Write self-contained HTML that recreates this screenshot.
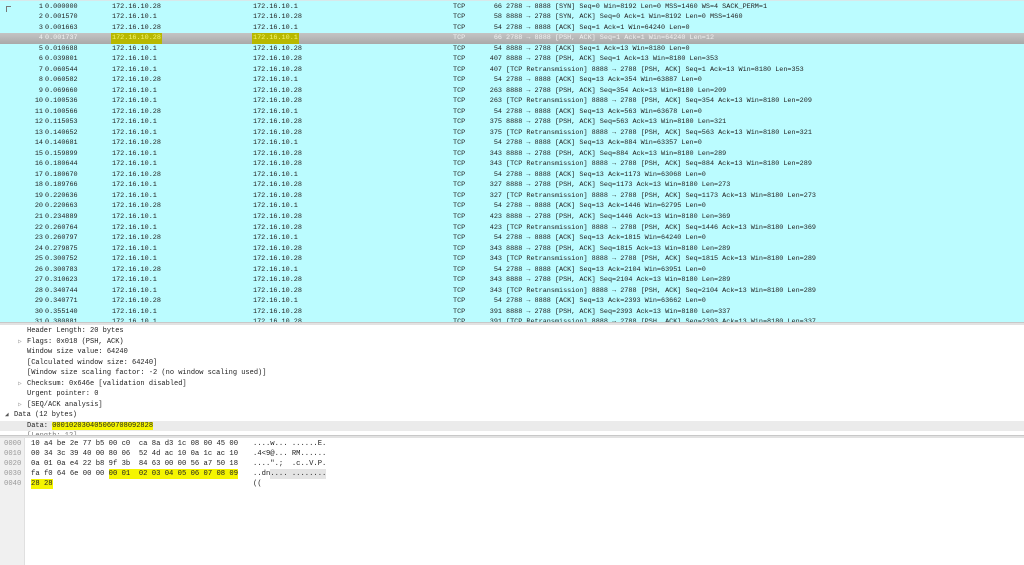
<!DOCTYPE html>
<html><head><meta charset="utf-8"><style>
*{margin:0;padding:0;box-sizing:border-box}
body{width:1024px;height:565px;overflow:hidden;background:#fff;font-family:"Liberation Mono","DejaVu Sans Mono",monospace;color:#222;position:relative}
#top{position:absolute;left:0;top:0;width:1024px;height:322px;background:#bbfcff;overflow:hidden;border-top:1px solid #d8e8ea}
.r{position:absolute;left:0;width:1024px;height:10.5px;font-size:6.8px;line-height:10.5px;white-space:pre}
.r span{position:absolute;top:0}
.n{right:981px;text-align:right}
.t{left:45px}.s{left:112px}.d{left:253px}.p{left:453px}
.l{right:522px;text-align:right}.i{left:506px}
.sel{background:linear-gradient(#c4c4c4,#a9a9a9);color:#f0f0f0}
.sel .hl{background:#e8e800;color:#dada40;padding:0 1px;margin-left:-1px}
.sel .hl{color:#f4f470;background:#b8b800}
#sep1{position:absolute;left:0;top:322px;width:1024px;height:3px;background:#e2e2e2;border-top:1px solid #c8c8c8}
#det{position:absolute;left:0;top:325px;width:1024px;height:110px;background:#fff;overflow:hidden}
.dr{position:absolute;left:0;width:1024px;height:10.5px;font-size:7px;line-height:10.5px;white-space:pre}
.dr span{position:absolute;top:0}
.ar{color:#888;font-size:6px}
#sep2{position:absolute;left:0;top:435px;width:1024px;height:3px;background:#e2e2e2;border-top:1px solid #c8c8c8}
#gut{position:absolute;left:0;top:438px;width:25px;height:127px;background:#f0f0f0;border-right:1px solid #e0e0e0}
.br{position:absolute;left:0;height:10px;font-size:7.2px;line-height:10px;white-space:pre}
.br span{position:absolute;top:0}
.o{left:4px;color:#999}.h{left:31px}.a{left:253px}
.y{background:#f5f500}
</style></head><body>
<div id="top">
<div style="position:absolute;left:6px;top:5px;width:5px;height:6px;border-left:1px solid #777;border-top:1px solid #777"></div>
<div class="r" style="top:0.5px"><span class="n">1</span><span class="t">0.000000</span><span class="s">172.16.10.28</span><span class="d">172.16.10.1</span><span class="p">TCP</span><span class="l">66</span><span class="i">2788 → 8888 [SYN] Seq=0 Win=8192 Len=0 MSS=1460 WS=4 SACK_PERM=1</span></div>
<div class="r" style="top:11px"><span class="n">2</span><span class="t">0.001570</span><span class="s">172.16.10.1</span><span class="d">172.16.10.28</span><span class="p">TCP</span><span class="l">58</span><span class="i">8888 → 2788 [SYN, ACK] Seq=0 Ack=1 Win=8192 Len=0 MSS=1460</span></div>
<div class="r" style="top:21.5px"><span class="n">3</span><span class="t">0.001663</span><span class="s">172.16.10.28</span><span class="d">172.16.10.1</span><span class="p">TCP</span><span class="l">54</span><span class="i">2788 → 8888 [ACK] Seq=1 Ack=1 Win=64240 Len=0</span></div>
<div class="r sel" style="top:32px"><span class="n">4</span><span class="t">0.001737</span><span class="s hl">172.16.10.28</span><span class="d hl">172.16.10.1</span><span class="p">TCP</span><span class="l">66</span><span class="i">2788 → 8888 [PSH, ACK] Seq=1 Ack=1 Win=64240 Len=12</span></div>
<div class="r" style="top:42.6px"><span class="n">5</span><span class="t">0.010688</span><span class="s">172.16.10.1</span><span class="d">172.16.10.28</span><span class="p">TCP</span><span class="l">54</span><span class="i">8888 → 2788 [ACK] Seq=1 Ack=13 Win=8180 Len=0</span></div>
<div class="r" style="top:53.1px"><span class="n">6</span><span class="t">0.039801</span><span class="s">172.16.10.1</span><span class="d">172.16.10.28</span><span class="p">TCP</span><span class="l">407</span><span class="i">8888 → 2788 [PSH, ACK] Seq=1 Ack=13 Win=8180 Len=353</span></div>
<div class="r" style="top:63.6px"><span class="n">7</span><span class="t">0.060544</span><span class="s">172.16.10.1</span><span class="d">172.16.10.28</span><span class="p">TCP</span><span class="l">407</span><span class="i">[TCP Retransmission] 8888 → 2788 [PSH, ACK] Seq=1 Ack=13 Win=8180 Len=353</span></div>
<div class="r" style="top:74.1px"><span class="n">8</span><span class="t">0.060582</span><span class="s">172.16.10.28</span><span class="d">172.16.10.1</span><span class="p">TCP</span><span class="l">54</span><span class="i">2788 → 8888 [ACK] Seq=13 Ack=354 Win=63887 Len=0</span></div>
<div class="r" style="top:84.7px"><span class="n">9</span><span class="t">0.069660</span><span class="s">172.16.10.1</span><span class="d">172.16.10.28</span><span class="p">TCP</span><span class="l">263</span><span class="i">8888 → 2788 [PSH, ACK] Seq=354 Ack=13 Win=8180 Len=209</span></div>
<div class="r" style="top:95.2px"><span class="n">10</span><span class="t">0.100536</span><span class="s">172.16.10.1</span><span class="d">172.16.10.28</span><span class="p">TCP</span><span class="l">263</span><span class="i">[TCP Retransmission] 8888 → 2788 [PSH, ACK] Seq=354 Ack=13 Win=8180 Len=209</span></div>
<div class="r" style="top:105.7px"><span class="n">11</span><span class="t">0.100566</span><span class="s">172.16.10.28</span><span class="d">172.16.10.1</span><span class="p">TCP</span><span class="l">54</span><span class="i">2788 → 8888 [ACK] Seq=13 Ack=563 Win=63678 Len=0</span></div>
<div class="r" style="top:116.2px"><span class="n">12</span><span class="t">0.115053</span><span class="s">172.16.10.1</span><span class="d">172.16.10.28</span><span class="p">TCP</span><span class="l">375</span><span class="i">8888 → 2788 [PSH, ACK] Seq=563 Ack=13 Win=8180 Len=321</span></div>
<div class="r" style="top:126.8px"><span class="n">13</span><span class="t">0.140652</span><span class="s">172.16.10.1</span><span class="d">172.16.10.28</span><span class="p">TCP</span><span class="l">375</span><span class="i">[TCP Retransmission] 8888 → 2788 [PSH, ACK] Seq=563 Ack=13 Win=8180 Len=321</span></div>
<div class="r" style="top:137.3px"><span class="n">14</span><span class="t">0.140681</span><span class="s">172.16.10.28</span><span class="d">172.16.10.1</span><span class="p">TCP</span><span class="l">54</span><span class="i">2788 → 8888 [ACK] Seq=13 Ack=884 Win=63357 Len=0</span></div>
<div class="r" style="top:147.8px"><span class="n">15</span><span class="t">0.159899</span><span class="s">172.16.10.1</span><span class="d">172.16.10.28</span><span class="p">TCP</span><span class="l">343</span><span class="i">8888 → 2788 [PSH, ACK] Seq=884 Ack=13 Win=8180 Len=289</span></div>
<div class="r" style="top:158.3px"><span class="n">16</span><span class="t">0.180644</span><span class="s">172.16.10.1</span><span class="d">172.16.10.28</span><span class="p">TCP</span><span class="l">343</span><span class="i">[TCP Retransmission] 8888 → 2788 [PSH, ACK] Seq=884 Ack=13 Win=8180 Len=289</span></div>
<div class="r" style="top:168.9px"><span class="n">17</span><span class="t">0.180670</span><span class="s">172.16.10.28</span><span class="d">172.16.10.1</span><span class="p">TCP</span><span class="l">54</span><span class="i">2788 → 8888 [ACK] Seq=13 Ack=1173 Win=63068 Len=0</span></div>
<div class="r" style="top:179.4px"><span class="n">18</span><span class="t">0.189766</span><span class="s">172.16.10.1</span><span class="d">172.16.10.28</span><span class="p">TCP</span><span class="l">327</span><span class="i">8888 → 2788 [PSH, ACK] Seq=1173 Ack=13 Win=8180 Len=273</span></div>
<div class="r" style="top:189.9px"><span class="n">19</span><span class="t">0.220636</span><span class="s">172.16.10.1</span><span class="d">172.16.10.28</span><span class="p">TCP</span><span class="l">327</span><span class="i">[TCP Retransmission] 8888 → 2788 [PSH, ACK] Seq=1173 Ack=13 Win=8180 Len=273</span></div>
<div class="r" style="top:200.4px"><span class="n">20</span><span class="t">0.220663</span><span class="s">172.16.10.28</span><span class="d">172.16.10.1</span><span class="p">TCP</span><span class="l">54</span><span class="i">2788 → 8888 [ACK] Seq=13 Ack=1446 Win=62795 Len=0</span></div>
<div class="r" style="top:211px"><span class="n">21</span><span class="t">0.234889</span><span class="s">172.16.10.1</span><span class="d">172.16.10.28</span><span class="p">TCP</span><span class="l">423</span><span class="i">8888 → 2788 [PSH, ACK] Seq=1446 Ack=13 Win=8180 Len=369</span></div>
<div class="r" style="top:221.5px"><span class="n">22</span><span class="t">0.260764</span><span class="s">172.16.10.1</span><span class="d">172.16.10.28</span><span class="p">TCP</span><span class="l">423</span><span class="i">[TCP Retransmission] 8888 → 2788 [PSH, ACK] Seq=1446 Ack=13 Win=8180 Len=369</span></div>
<div class="r" style="top:232px"><span class="n">23</span><span class="t">0.260797</span><span class="s">172.16.10.28</span><span class="d">172.16.10.1</span><span class="p">TCP</span><span class="l">54</span><span class="i">2788 → 8888 [ACK] Seq=13 Ack=1815 Win=64240 Len=0</span></div>
<div class="r" style="top:242.5px"><span class="n">24</span><span class="t">0.279875</span><span class="s">172.16.10.1</span><span class="d">172.16.10.28</span><span class="p">TCP</span><span class="l">343</span><span class="i">8888 → 2788 [PSH, ACK] Seq=1815 Ack=13 Win=8180 Len=289</span></div>
<div class="r" style="top:253.1px"><span class="n">25</span><span class="t">0.300752</span><span class="s">172.16.10.1</span><span class="d">172.16.10.28</span><span class="p">TCP</span><span class="l">343</span><span class="i">[TCP Retransmission] 8888 → 2788 [PSH, ACK] Seq=1815 Ack=13 Win=8180 Len=289</span></div>
<div class="r" style="top:263.6px"><span class="n">26</span><span class="t">0.300783</span><span class="s">172.16.10.28</span><span class="d">172.16.10.1</span><span class="p">TCP</span><span class="l">54</span><span class="i">2788 → 8888 [ACK] Seq=13 Ack=2104 Win=63951 Len=0</span></div>
<div class="r" style="top:274.1px"><span class="n">27</span><span class="t">0.310623</span><span class="s">172.16.10.1</span><span class="d">172.16.10.28</span><span class="p">TCP</span><span class="l">343</span><span class="i">8888 → 2788 [PSH, ACK] Seq=2104 Ack=13 Win=8180 Len=289</span></div>
<div class="r" style="top:284.6px"><span class="n">28</span><span class="t">0.340744</span><span class="s">172.16.10.1</span><span class="d">172.16.10.28</span><span class="p">TCP</span><span class="l">343</span><span class="i">[TCP Retransmission] 8888 → 2788 [PSH, ACK] Seq=2104 Ack=13 Win=8180 Len=289</span></div>
<div class="r" style="top:295.2px"><span class="n">29</span><span class="t">0.340771</span><span class="s">172.16.10.28</span><span class="d">172.16.10.1</span><span class="p">TCP</span><span class="l">54</span><span class="i">2788 → 8888 [ACK] Seq=13 Ack=2393 Win=63662 Len=0</span></div>
<div class="r" style="top:305.7px"><span class="n">30</span><span class="t">0.355140</span><span class="s">172.16.10.1</span><span class="d">172.16.10.28</span><span class="p">TCP</span><span class="l">391</span><span class="i">8888 → 2788 [PSH, ACK] Seq=2393 Ack=13 Win=8180 Len=337</span></div>
<div class="r" style="top:316.2px"><span class="n">31</span><span class="t">0.380881</span><span class="s">172.16.10.1</span><span class="d">172.16.10.28</span><span class="p">TCP</span><span class="l">391</span><span class="i">[TCP Retransmission] 8888 → 2788 [PSH, ACK] Seq=2393 Ack=13 Win=8180 Len=337</span></div>
</div>
<div id="sep1"></div>
<div id="det">
<div class="dr" style="top:1px"><span style="left:27px">Header Length: 20 bytes</span></div>
<div class="dr" style="top:11.5px"><span class="ar" style="left:18px">▷</span><span style="left:27px">Flags: 0x018 (PSH, ACK)</span></div>
<div class="dr" style="top:22px"><span style="left:27px">Window size value: 64240</span></div>
<div class="dr" style="top:32.5px"><span style="left:27px">[Calculated window size: 64240]</span></div>
<div class="dr" style="top:43px"><span style="left:27px">[Window size scaling factor: -2 (no window scaling used)]</span></div>
<div class="dr" style="top:53.5px"><span class="ar" style="left:18px">▷</span><span style="left:27px">Checksum: 0x646e [validation disabled]</span></div>
<div class="dr" style="top:64px"><span style="left:27px">Urgent pointer: 0</span></div>
<div class="dr" style="top:74.5px"><span class="ar" style="left:18px">▷</span><span style="left:27px">[SEQ/ACK analysis]</span></div>
<div class="dr" style="top:85px"><span class="ar" style="left:5px;color:#555">◢</span><span style="left:14px">Data (12 bytes)</span></div>
<div class="dr" style="top:95.5px;background:#ebebeb"><span style="left:27px">Data: <span class="y" style="position:static">000102030405060708092828</span></span></div>
<div class="dr" style="top:106px;color:#777"><span style="left:27px">[Length: 12]</span></div>
</div>
<div id="sep2"></div>
<div id="gut"></div>
<div class="br" style="top:439px"><span class="o">0000</span><span class="h">10 a4 be 2e 77 b5 00 c0  ca 8a d3 1c 08 00 45 00</span><span class="a">....w... ......E.</span></div>
<div class="br" style="top:449px"><span class="o">0010</span><span class="h">00 34 3c 39 40 00 80 06  52 4d ac 10 0a 1c ac 10</span><span class="a">.4&lt;9@... RM......</span></div>
<div class="br" style="top:459px"><span class="o">0020</span><span class="h">0a 01 0a e4 22 b8 9f 3b  84 63 00 00 56 a7 50 18</span><span class="a">....".;  .c..V.P.</span></div>
<div class="br" style="top:469px"><span class="o">0030</span><span class="h">fa f0 64 6e 00 00 <span class="y">00 01  02 03 04 05 06 07 08 09</span></span><span class="a">..dn<span style="background:#e4e4e4">.... ........</span></span></div>
<div class="br" style="top:479px"><span class="o">0040</span><span class="h"><span class="y">28 28</span></span><span class="a">((</span></div>
</body></html>
